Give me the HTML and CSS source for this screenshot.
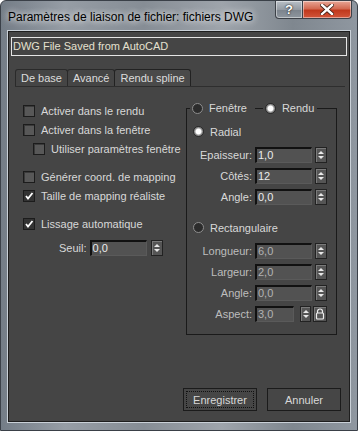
FILE: index.html
```html
<!DOCTYPE html>
<html lang="fr">

<head>
  <meta charset="UTF-8">
  <title>Paramètres de liaison de fichier</title>
  <link rel="stylesheet" href="styles.css">
</head>

<body>

  <div class="window">
    <div class="titlebar">
      <span class="title">Paramètres de liaison de fichier: fichiers DWG</span>
      <div class="caption-btns">
        <span class="cap help">?</span>
        <span class="cap close">
          <svg width="14" height="11" viewBox="0 0 14 11">
            <path d="M2 1 L12 10 M12 1 L2 10" stroke="#3a1a10" stroke-width="4" stroke-linecap="square" />
            <path d="M2 1 L12 10 M12 1 L2 10" stroke="#fff" stroke-width="2.4" stroke-linecap="square" />
          </svg>
        </span>
      </div>
    </div>

    <div class="client">
      <div class="file-name">DWG File Saved from AutoCAD</div>

      <div class="tabs">
        <span class="tab">De base</span>
        <span class="tab">Avancé</span>
        <span class="tab active">Rendu spline</span>
      </div>

      <div class="panel">
        <!-- colonne gauche -->
        <div class="col-left">
          <label class="check-row"><span class="box"></span>Activer dans le rendu</label>
          <label class="check-row"><span class="box"></span>Activer dans la fenêtre</label>
          <label class="check-row indent"><span class="box"></span>Utiliser paramètres fenêtre</label>

          <label class="check-row gap"><span class="box"></span>Générer coord. de mapping</label>
          <label class="check-row"><span class="box checked"><svg width="10" height="10" viewBox="0 0 10 10"><path d="M2 5 L4 7.5 L8.5 2" fill="none" stroke="#fff" stroke-width="1.8" /></svg></span>Taille de mapping réaliste</label>

          <label class="check-row gap"><span class="box checked"><svg width="10" height="10" viewBox="0 0 10 10"><path d="M2 5 L4 7.5 L8.5 2" fill="none" stroke="#fff" stroke-width="1.8" /></svg></span>Lissage automatique</label>

          <div class="seuil-row">
            <span>Seuil:</span>
            <span class="field">0,0</span>
            <span class="spin"><i class="up"></i><i class="down"></i></span>
          </div>
        </div>

        <!-- groupe de droite -->
        <fieldset class="group">
          <legend>
            <span class="radio"></span><span class="legend-txt">Fenêtre</span>
            <span class="legend-line"></span>
            <span class="radio on"></span><span class="legend-txt">Rendu</span>
          </legend>

          <div class="radio-row first"><span class="radio on"></span>Radial</div>
          <div class="num-grid">
            <span class="lbl">Epaisseur:</span><span class="field">1,0</span><span class="spin"><i class="up"></i><i class="down"></i></span>
            <span class="lbl">Côtés:</span><span class="field">12</span><span class="spin"><i class="up"></i><i class="down"></i></span>
            <span class="lbl">Angle:</span><span class="field">0,0</span><span class="spin"><i class="up"></i><i class="down"></i></span>
          </div>

          <div class="radio-row second"><span class="radio"></span>Rectangulaire</div>
          <div class="num-grid disabled">
            <span class="lbl">Longueur:</span><span class="field">6,0</span><span class="spin"><i class="up"></i><i class="down"></i></span>
            <span class="lbl">Largeur:</span><span class="field">2,0</span><span class="spin"><i class="up"></i><i class="down"></i></span>
            <span class="lbl">Angle:</span><span class="field">0,0</span><span class="spin"><i class="up"></i><i class="down"></i></span>
            <span class="lbl">Aspect:</span>
            <span class="aspect">
              <span class="field short">3,0</span>
              <span class="spin"><i class="up"></i><i class="down"></i></span>
              <span class="lock">
                <svg width="10" height="12" viewBox="0 0 10 12">
                  <path d="M2.5 5 V3.5 A2.5 2.5 0 0 1 7.5 3.5 V5" fill="none" stroke="#eee" stroke-width="1.2" />
                  <rect x="1.5" y="5" width="7" height="6" rx="1" fill="none" stroke="#eee" stroke-width="1.2" />
                </svg>
              </span>
            </span>
          </div>
        </fieldset>
      </div>

      <div class="buttons">
        <button class="btn focus">Enregistrer</button>
        <button class="btn">Annuler</button>
      </div>
    </div>
  </div>

</body>

</html>
```

FILE: styles.css
```css
body {
  margin: 0;
  padding: 0;
  background: #fff;
  font-family: "Liberation Sans", Arial, sans-serif;
}

.window {
  width: 358px;
  height: 431px;
  box-sizing: border-box;
  padding: 0 7px 8px 7px;
  border: 1px solid #3a4048;
  border-radius: 6px 6px 0 0;
  background: linear-gradient(90deg, #747d87 0%, #969da5 18%, #868d95 40%, #9ea4ab 62%, #7f878f 82%, #8f97a0 100%);
  display: flex;
  flex-direction: column;
}

/* Title bar */
.titlebar {
  height: 30px;
  display: flex;
  justify-content: space-between;
  align-items: flex-start;
}

.title {
  margin-top: 9px;
  font-size: 12px;
  color: #000;
  text-shadow: 0 0 6px rgba(255, 255, 255, 0.9), 0 0 10px rgba(255, 255, 255, 0.6);
}

.caption-btns {
  display: flex;
  margin-right: -2px;
}

.cap {
  height: 18px;
  box-sizing: border-box;
  border: 1px solid #3c4148;
  border-top: none;
  box-shadow: inset 0 0 0 1px rgba(255, 255, 255, 0.45);
  display: flex;
  align-items: center;
  justify-content: center;
}

.help {
  width: 28px;
  border-radius: 0 0 0 4px;
  background: linear-gradient(#b9c0c7, #949ba3 50%, #7b838c 51%, #8e969e);
  color: #fff;
  font-weight: bold;
  font-size: 13px;
  text-shadow: 0 0 2px #222, 0 0 1px #222;
}

.close {
  width: 49px;
  border-left: none;
  border-radius: 0 0 4px 0;
  background: linear-gradient(#e8a696, #d36a52 45%, #c0391d 55%, #d2553a);
}

/* Client area */
.client {
  flex: 1;
  background: #454545;
  border: 1px solid #1e1e1e;
  box-shadow: 0 0 0 1px #c9d0d7;
  display: flex;
  flex-direction: column;
  color: #d8d8d8;
  font-size: 11px;
}

.file-name {
  margin: 5px 2px 0 2px;
  height: 19px;
  box-sizing: border-box;
  border: 1px solid #e6e6e6;
  padding-left: 1px;
  line-height: 17px;
  font-size: 11px;
  color: #e4e0cf;
}

.tabs {
  display: flex;
  margin: 13px 4px 0 6px;
  border-bottom: 1px solid #2e2e2e;
}

.tab {
  height: 16px;
  line-height: 16px;
  padding: 0 5px 0 5px;
  border: 1px solid #2a2a2a;
  border-bottom: none;
  border-radius: 3px 3px 0 0;
  margin-right: -1px;
  color: #dcdcdc;
  font-size: 11px;
}

.tab.active {
  background: #4a4a4a;
  border-color: #222;
}

.panel {
  display: flex;
  padding: 14px 0 0 14px;
}

/* Left column */
.col-left {
  width: 163px;
  white-space: nowrap;
}

.check-row {
  height: 19px;
  display: flex;
  align-items: center;
  gap: 6px;
}

.check-row.indent {
  padding-left: 10px;
}

.check-row.gap {
  margin-top: 9px;
}

.box {
  width: 12px;
  height: 12px;
  box-sizing: border-box;
  border: 1px solid #1c1c1c;
  background: #585858;
  box-shadow: inset 1px 1px 0 #3a3a3a;
  display: flex;
  align-items: center;
  justify-content: center;
}

.box.checked {
  background: #333;
  box-shadow: none;
}

.seuil-row {
  margin-top: 5px;
  height: 19px;
  display: flex;
  align-items: center;
  padding-left: 36px;
}

.seuil-row .field {
  width: 57px;
  margin-left: 3px;
}

.seuil-row .spin {
  margin-left: 4px;
}

/* Inputs and spinners */
.field {
  height: 16px;
  box-sizing: border-box;
  border-top: 2px solid #111;
  border-left: 2px solid #111;
  border-right: 1px solid #5a5a5a;
  border-bottom: 1px solid #5a5a5a;
  background: #525252;
  padding-left: 1px;
  line-height: 13px;
  color: #ececec;
  font-size: 11px;
}

.spin {
  width: 12px;
  height: 16px;
  box-sizing: border-box;
  border: 1px solid #222;
  background: #555;
  box-shadow: inset 1px 1px 0 #7a7a7a;
  display: flex;
  flex-direction: column;
  align-items: center;
  justify-content: space-around;
  padding: 2px 0;
}

.spin i {
  width: 0;
  height: 0;
  border-left: 3px solid transparent;
  border-right: 3px solid transparent;
}

.spin .up {
  border-bottom: 3px solid #e8e8e8;
}

.spin .down {
  border-top: 3px solid #e8e8e8;
}

/* Right group box */
.group {
  margin: 0;
  padding: 0 8px 10px 0;
  width: 151px;
  box-sizing: border-box;
  border: 1px solid #1a1a1a;
}

.group legend {
  margin-left: 3px;
  padding: 0 3px 0 2px;
  height: 14px;
  display: flex;
  align-items: center;
}

.legend-txt {
  margin-left: 6px;
}

.legend-line {
  width: 8px;
  height: 1px;
  background: #1a1a1a;
  margin: 0 2px 0 8px;
}

.radio {
  width: 11px;
  height: 11px;
  box-sizing: border-box;
  border-radius: 50%;
  border: 1px solid #8e8e8e;
  background: #2c2c2c;
}

.radio.on {
  background: radial-gradient(circle, #fff 0 2.5px, #9a9a9a 3.5px, #5e5e5e);
  border-color: #2a2a2a;
}

.radio-row {
  height: 21px;
  display: flex;
  align-items: center;
  gap: 6px;
  padding-left: 6px;
}

.radio-row.first {
  margin-top: 6px;
}

.radio-row.second {
  margin-top: 10px;
}

.num-grid {
  margin-top: 2px;
  display: grid;
  grid-template-columns: 65px 57px 12px;
  grid-auto-rows: 21px;
  column-gap: 3px;
  align-items: center;
}

.lbl {
  text-align: right;
}

.num-grid.disabled .lbl {
  color: #bdbdbd;
}

.num-grid.disabled .field {
  color: #b2b2b2;
}

.aspect {
  grid-column: 2 / 4;
  display: flex;
  align-items: center;
}

.field.short {
  width: 40px;
}

.aspect .spin {
  width: 11px;
  margin-left: 6px;
}

.lock {
  width: 14px;
  height: 16px;
  margin-left: 2px;
  box-sizing: border-box;
  border: 1px solid #222;
  background: #555;
  box-shadow: inset 1px 1px 0 #7a7a7a;
  display: flex;
  align-items: center;
  justify-content: center;
}

/* Bottom buttons */
.buttons {
  margin-top: auto;
  display: flex;
  justify-content: flex-end;
  gap: 10px;
  padding: 0 8px 10px 0;
}

.btn {
  width: 74px;
  height: 23px;
  background: #464646;
  border: 1px solid #1b1b1b;
  color: #d8d8d8;
  font-family: "Liberation Sans", Arial, sans-serif;
  font-size: 11px;
  padding: 0;
}

.btn.focus {
  outline: 1px dotted #111;
  outline-offset: -4px;
}
```
